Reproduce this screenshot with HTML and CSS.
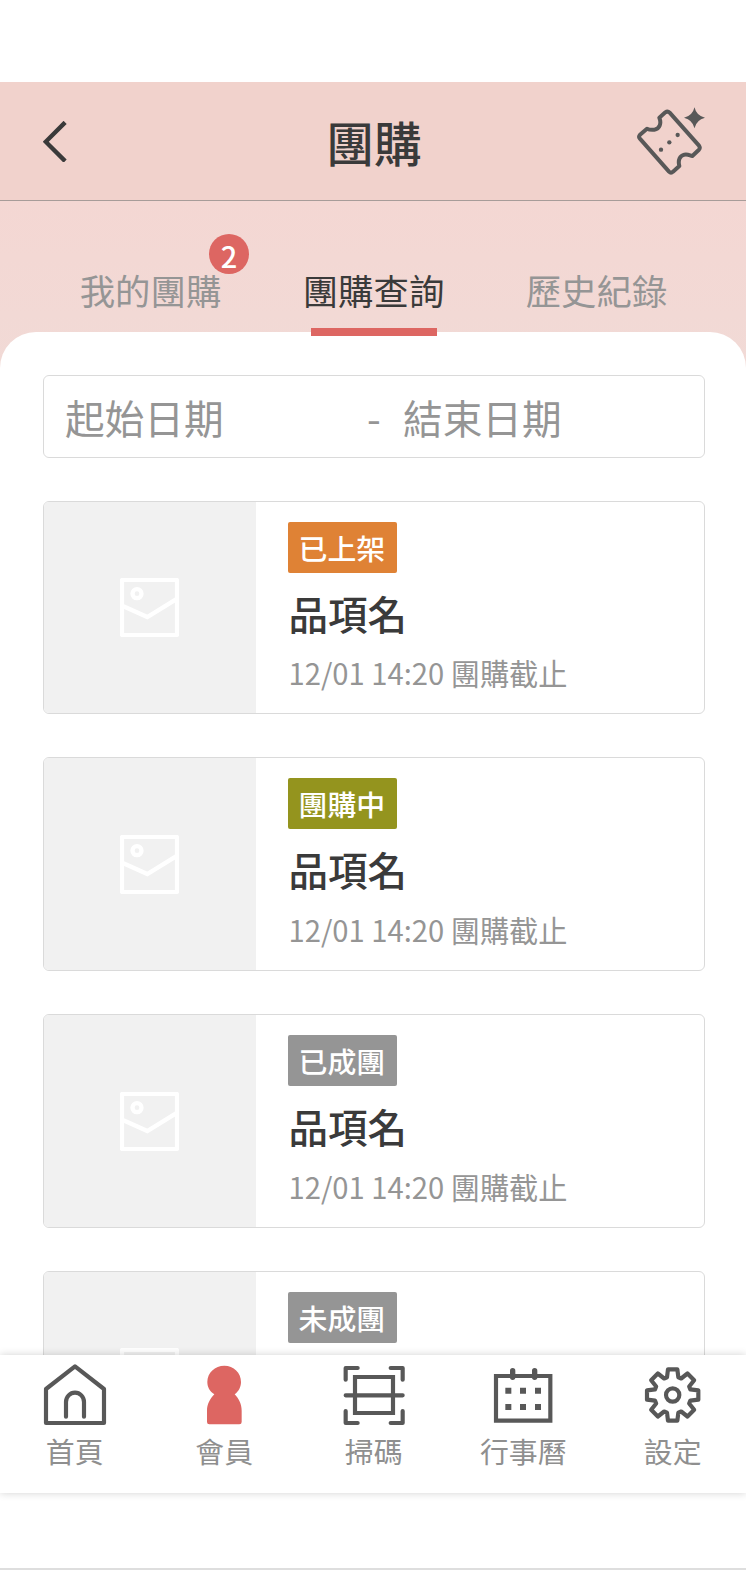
FILE: index.html
```html
<!DOCTYPE html>
<html lang="zh-Hant">
<head>
<meta charset="utf-8">
<title>團購</title>
<link rel="stylesheet" href="styles.css">
</head>
<body>
<svg class="defs" width="0" height="0">
  <symbol id="picture" viewBox="270 264 177 177">
    <rect x="276" y="270" width="165" height="165" rx="1" stroke-width="12.5"/>
    <circle cx="321" cy="311" r="13.5" stroke-width="13"/>
    <path d="M280 348.500L352 381L438 328" stroke-width="13"/>
  </symbol>
</svg>
<div class="screen">
  <header class="header">
    <svg class="back" viewBox="129 152 70 124"><path d="M195 156L137 214L195 272"/></svg>
    <h1 class="title">團購</h1>
    <svg class="ticket" viewBox="36 36 204 204">
      <path class="ticket-line" d="M66 101L45 119Q40 125 44 130L132 230Q138 236 144 230L163 213C158 195 165 182 178 179C190 177 195 182 202 183L221 165Q227 159 222 152L134 53Q128 47 121 52L103 68C110 85 104 102 88 104C78 105 72 104 66 101Z"/>
      <g class="ticket-fill"><circle cx="108" cy="164" r="6.5"/><circle cx="133" cy="142" r="6.5"/><circle cx="158" cy="120" r="6.5"/>
      <path d="M208.500 37Q214 62 240 68.500Q214 75 208.500 100Q203 75 177 68.500Q203 62 208.500 37Z"/></g>
    </svg>
  </header>
  <nav class="tabs">
    <a class="tab">我的團購<span class="badge">2</span></a>
    <a class="tab active">團購查詢</a>
    <a class="tab">歷史紀錄</a>
  </nav>
  <main class="panel">
    <div class="dates"><span class="start">起始日期</span><span class="dash">-</span><span>結束日期</span></div>
    <article class="card">
      <div class="thumb"><svg class="picture"><use href="#picture"/></svg></div>
      <div class="info"><span class="tag orange">已上架</span><h2 class="name">品項名</h2><p class="due">12/01 14:20 團購截止</p></div>
    </article>
    <article class="card">
      <div class="thumb"><svg class="picture"><use href="#picture"/></svg></div>
      <div class="info"><span class="tag olive">團購中</span><h2 class="name">品項名</h2><p class="due">12/01 14:20 團購截止</p></div>
    </article>
    <article class="card">
      <div class="thumb"><svg class="picture"><use href="#picture"/></svg></div>
      <div class="info"><span class="tag gray">已成團</span><h2 class="name">品項名</h2><p class="due">12/01 14:20 團購截止</p></div>
    </article>
    <article class="card">
      <div class="thumb"><svg class="picture"><use href="#picture"/></svg></div>
      <div class="info"><span class="tag gray">未成團</span></div>
    </article>
  </main>
  <footer class="bottom-nav">
    <a class="item"><svg class="icon" viewBox="120 66 210 195"><path d="M138 249V147L225 79L312 147V249Z"/><path d="M198 230V186a27 28 0 0 1 54 0V230"/></svg>首頁</a>
    <a class="item"><svg class="icon member" viewBox="567 66 210 195"><path d="M643 163C628 153 622 140 622 126C622 98 645 77 673 77C701 77 723 98 723 126C723 141 716 154 704 163C717 176 725 193 725 212V246Q725 253 718 253H628Q621 253 621 246V212C621 193 630 176 643 163Z"/></svg>會員</a>
    <a class="item"><svg class="icon" viewBox="1017 66 210 195"><path d="M1037 119V84H1073M1172 84H1208V119M1037 213V249H1073M1172 249H1208V213M1037 166H1208"/><path class="square" d="M1065 111H1179V219H1065Z"/></svg>掃碼</a>
    <a class="item"><svg class="icon" viewBox="345 66 210 195"><path class="square" d="M369 108H532V242H369Z"/><path class="pins" d="M419 92V112M485 92V112"/><path class="dots" d="M397 143h18v18h-18zM441 143h18v18h-18zM486 143h18v18h-18zM397 192h18v18h-18zM441 192h18v18h-18zM486 192h18v18h-18z"/></svg>行事曆</a>
    <a class="item"><svg class="icon" viewBox="-104 -99 210 195"><path d="M-17 -53L-14 -77L14 -77L17 -53L25.500 -49.500L44.500 -64.500L64.500 -44.500L49.500 -25.500L53 -17L77 -14L77 14L53 17L49.500 25.500L64.500 44.500L44.500 64.500L25.500 49.500L17 53L14 77L-14 77L-17 53L-25.500 49.500L-44.500 64.500L-64.500 44.500L-49.500 25.500L-53 17L-77 14L-77 -14L-53 -17L-49.500 -25.500L-64.500 -44.500L-44.500 -64.500L-25.500 -49.500Z"/><circle r="20"/></svg>設定</a>
  </footer>
</div>
</body>
</html>
```
FILE: styles.css
```css
* { box-sizing: border-box; }
body { margin: 0; background: #fff; font-family: "Noto Sans CJK TC", sans-serif; }
h1, h2, p { margin: 0; }
svg { display: block; fill: none; flex: none; }
.defs { position: absolute; }
.screen { height: 1570px; padding-top: 82px; border-bottom: 2px solid #dedede; overflow: hidden; display: flex; flex-direction: column; }
.header { height: 119px; flex: none; display: grid; grid-template-columns: 1fr auto 1fr; background: #f1d2cc; border-bottom: 1px solid #a79c99; padding: 0 41px 0 43px; }
.back { width: 23.500px; height: 41.500px; margin-top: 38.500px; stroke: #3a3a3a; stroke-width: 13; }
.title { font-size: 47.750px; line-height: 70px; font-weight: 500; color: #3a3a3a; margin-top: 25px; }
.ticket { width: 68px; height: 68px; margin-top: 25px; justify-self: end; }
.ticket-line { stroke: #585858; stroke-width: 12; stroke-linejoin: round; }
.ticket-fill { fill: #585858; }
.tabs { height: 171px; flex: none; margin-bottom: -40px; background: linear-gradient(#f4d7d3, #f1dad6); display: grid; grid-template-columns: repeat(3, 223px); justify-content: center; align-items: start; padding: 63px 0 0 1px; }
.tab { position: relative; height: 72px; font-size: 35.400px; line-height: 52px; text-align: center; color: #959595; }
.tab.active { color: #3a3a3a; z-index: 1; }
.tab.active::after { content: ""; position: absolute; left: 48.500px; top: 63.500px; width: 126px; height: 8.500px; background: #dd6662; }
.badge { position: absolute; left: 169.500px; top: -30px; width: 40px; height: 40px; border-radius: 50%; background: #dd6662; color: #fff; font-size: 29px; font-weight: 500; line-height: 42px; text-indent: 1px; }
.panel { flex: none; height: 1023px; overflow: hidden; background: #fff; border-radius: 36px 36px 0 0; padding: 42.500px 41.500px 0 42.500px; }
.dates { height: 83.500px; border: 1px solid #dadada; border-radius: 6px; padding: 1.500px 0 0 21.500px; display: flex; align-items: center; font-size: 39.700px; line-height: 58px; color: #959595; margin-bottom: 42.700px; }
.start { width: 302px; }
.dash { width: 36px; }
.card { height: 213.500px; margin-bottom: 43.300px; border: 1px solid #dadada; border-radius: 6px; display: flex; overflow: hidden; }
.thumb { width: 212.500px; flex: none; background: #f1f1f1; display: flex; align-items: center; justify-content: center; padding-right: 1px; }
.picture { width: 59px; height: 59px; stroke: #fff; }
.info { padding: 20px 0 0 32px; display: flex; flex-direction: column; align-items: flex-start; }
.tag { width: 109px; height: 51px; border-radius: 2px; color: #fff; font-size: 28.900px; font-weight: 500; line-height: 51px; padding-left: 10.500px; }
.orange { background: #df8235; }
.olive { background: #94941e; }
.gray { background: #959595; }
.name { font-size: 39.500px; font-weight: 500; line-height: 58px; color: #3a3a3a; margin-top: 11px; padding-left: .5px; }
.due { font-size: 29.200px; line-height: 42px; color: #959595; margin-top: 9.500px; padding-left: .5px; }
.bottom-nav { position: relative; height: 138px; flex: none; background: #fff; box-shadow: 0 0 8px rgba(0, 0, 0, .18); display: grid; grid-template-columns: repeat(5, 149.500px); }
.item { display: flex; flex-direction: column; align-items: center; padding: 7px 0 0; font-size: 28.900px; line-height: 43px; color: #8f8f8f; white-space: nowrap; }
.icon { width: 70px; height: 65px; margin-bottom: 1.500px; stroke: #585858; stroke-width: 12.500; stroke-linecap: round; stroke-linejoin: round; }
.member { fill: #dd6662; stroke: none; }
.square { stroke-linejoin: miter; }
.pins { stroke-width: 16; }
.dots { fill: #585858; stroke: none; }
```
